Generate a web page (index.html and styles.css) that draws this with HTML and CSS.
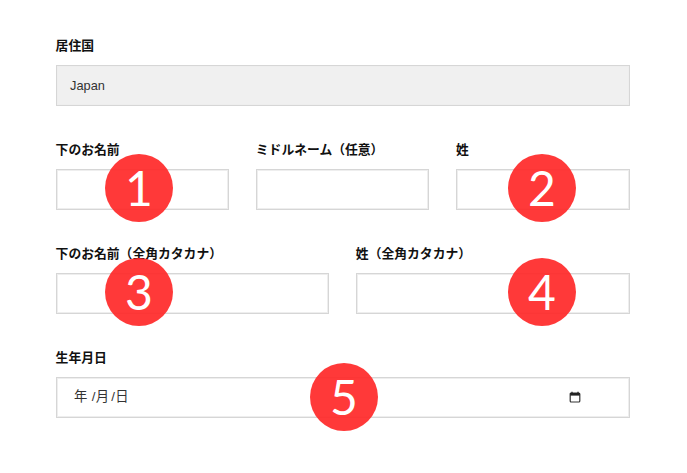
FILE: index.html
```html
<!DOCTYPE html>
<html lang="ja">

<head>
    <meta charset="UTF-8">
    <meta name="viewport" content="width=device-width, initial-scale=1.0">
    <title>Document</title>
    <link rel="stylesheet" href="styles.css">
</head>

<body>
    <form class="form">
        <div class="row">
            <div class="field">
                <label class="label">居住国</label>
                <div class="input disabled">Japan</div>
            </div>
        </div>
        <div class="row">
            <div class="field">
                <label class="label">下のお名前</label>
                <div class="input"></div>
            </div>
            <div class="field">
                <label class="label">ミドルネーム（任意）</label>
                <div class="input"></div>
            </div>
            <div class="field">
                <label class="label">姓</label>
                <div class="input"></div>
            </div>
        </div>
        <div class="row">
            <div class="field">
                <label class="label">下のお名前（全角カタカナ）</label>
                <div class="input"></div>
            </div>
            <div class="field">
                <label class="label">姓（全角カタカナ）</label>
                <div class="input"></div>
            </div>
        </div>
        <div class="row">
            <div class="field">
                <label class="label">生年月日</label>
                <div class="input date">
                    <span class="dateText">年 /月<span class="dateSep">/</span>日</span>
                    <svg class="calendar" viewBox="0 0 12 12" width="12" height="12">
                        <path d="M3 .8v1.7M9 .8v1.7" stroke="#222" stroke-width="1.3" fill="none" />
                        <rect x="1.2" y="2" width="9.6" height="9" rx="1" fill="none" stroke="#333" stroke-width="1.2" />
                        <rect x="1.2" y="2" width="9.6" height="2.6" fill="#222" />
                    </svg>
                </div>
            </div>
        </div>
    </form>

    <span class="badge b1">1</span>
    <span class="badge b2">2</span>
    <span class="badge b3">3</span>
    <span class="badge b4">4</span>
    <span class="badge b5">5</span>
</body>

</html>
```

FILE: styles.css
```css
* {
    margin: 0;
    padding: 0;
    box-sizing: border-box;
}

body {
    position: relative;
    width: 687px;
    height: 473px;
    overflow: hidden;
    background-color: #fff;
    font-family: "Liberation Sans", "Noto Sans CJK JP", sans-serif;
    color: #222;
}

.form {
    display: flex;
    flex-direction: column;
    gap: 35px;
    padding: 37px 57.5px 0 56px;
}

.row {
    display: flex;
    gap: 27px;
}

.field {
    flex: 1;
    display: flex;
    flex-direction: column;
    gap: 11px;
}

.label {
    height: 17px;
    line-height: 17px;
    margin-left: -.4px;
    font-size: 12.8px;
    font-weight: bold;
    color: #111;
}

.input {
    height: 41px;
    border: 1px solid #d6d6d6;
    box-shadow: inset 0 0 0 1px #eee;
    background-color: #fff;
    font-size: 12.8px;
    line-height: 39px;
    padding: 0 13px;
}

.input.disabled {
    background-color: #f0f0f0;
    color: #333;
}

.input.date {
    display: flex;
    justify-content: space-between;
    align-items: center;
    padding: 0 48px 2px 17px;
}

.dateText {
    font-size: 13.33px;
    letter-spacing: .3px;
    color: #333;
}

.dateSep {
    margin-left: 2px;
}

.badge {
    position: absolute;
    width: 68px;
    height: 68px;
    border-radius: 50%;
    background-color: rgba(255, 40, 40, .92);
    color: #fff;
    font-family: Lato, sans-serif;
    font-size: 48px;
    line-height: 68px;
    text-align: center;
}

.b1 {
    left: 105px;
    top: 154px;
}

.b2 {
    left: 508px;
    top: 154px;
}

.b3 {
    left: 105px;
    top: 258px;
}

.b4 {
    left: 508px;
    top: 258px;
}

.b5 {
    left: 310px;
    top: 363px;
}
```
